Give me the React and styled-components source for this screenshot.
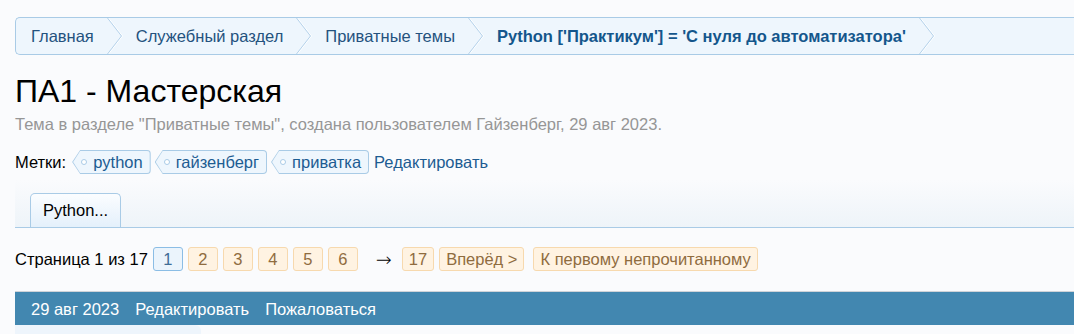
import React from 'react';
import styled, { createGlobalStyle } from 'styled-components';

const GlobalStyle = createGlobalStyle`
  html, body {
    margin: 0;
    padding: 0;
    overflow: hidden;
  }
  body {
    background: #fafbfd;
    font-family: "Liberation Sans", Arial, sans-serif;
    font-size: 16.5px;
    color: #000;
  }
`;

const crumbs = ['Главная', 'Служебный раздел', 'Приватные темы'];
const tags = ['python', 'гайзенберг', 'приватка'];
const pages = [1, 2, 3, 4, 5, 6];

const Arrow = () => (
  <svg width="16" height="36" viewBox="0 0 16 36">
    <polyline points="1.5,0 15.5,18 1.5,36" fill="none" stroke="#ffffff" strokeWidth="1" />
    <polyline points="0.5,0 14.5,18 0.5,36" fill="none" stroke="#b4d1ea" strokeWidth="1" />
  </svg>
);

const App = () => (
  <Page>
    <GlobalStyle />
    <Crumbs>
      {crumbs.map((c, i) => (
        <Crumb key={c} $first={i === 0}>
          <span>{c}</span>
          <Arrow />
        </Crumb>
      ))}
      <Crumb $current>
        <span>Python ['Практикум'] = 'С нуля до автоматизатора'</span>
        <Arrow />
      </Crumb>
    </Crumbs>

    <Title>ПА1 - Мастерская</Title>
    <Meta>Тема в разделе "Приватные темы", создана пользователем Гайзенберг, 29 авг 2023.</Meta>

    <TagRow>
      <TagLabel>Метки:</TagLabel>
      {tags.map((t) => (
        <Tag key={t}>
          <TagInner>
            <TagHole />
            {t}
          </TagInner>
        </Tag>
      ))}
      <EditLink>Редактировать</EditLink>
    </TagRow>

    <TabBar>
      <Tab>Python...</Tab>
    </TabBar>

    <PageNav>
      <PageLabel>Страница 1 из 17</PageLabel>
      {pages.map((p) => (
        <PageLink key={p} $current={p === 1}>{p}</PageLink>
      ))}
      <Skip>→</Skip>
      <PageLink>17</PageLink>
      <PageLink>Вперёд &gt;</PageLink>
      <PageLink $spaced>К первому непрочитанному</PageLink>
    </PageNav>

    <PostBar>
      <span>29 авг 2023</span>
      <span>Редактировать</span>
      <span>Пожаловаться</span>
    </PostBar>
    <Post>
      <UserCol />
    </Post>
  </Page>
);

export default App;

const Page = styled.div`
  width: 1120px;
  padding: 17px 0 0 15px;
`;

const Crumbs = styled.nav`
  display: flex;
  height: 38px;
  box-sizing: border-box;
  border: 1px solid #a9cbe6;
  border-right: none;
  border-radius: 5px 0 0 5px;
  background: #eef6fd;
`;

const Crumb = styled.a`
  display: flex;
  align-items: center;
  gap: 13px;
  padding-left: ${(p) => (p.$first ? 15 : 13)}px;
  color: ${(p) => (p.$current ? '#14568c' : '#24527e')};
  font-weight: ${(p) => (p.$current ? 700 : 400)};
  white-space: nowrap;
`;

const Title = styled.h1`
  margin: 17px 0 0;
  font-size: 32px;
  font-weight: 400;
  line-height: 38px;
  color: #000;
`;

const Meta = styled.div`
  margin-top: 4px;
  font-size: 16.5px;
  line-height: 20px;
  color: #969696;
`;

const TagRow = styled.div`
  display: flex;
  align-items: center;
  gap: 4px;
  margin-top: 16px;
  height: 24px;
  line-height: 24px;
`;

const TagLabel = styled.span`
  margin-right: 2px;
`;

const Tag = styled.a`
  display: inline-flex;
  height: 24px;
  padding: 1px;
  box-sizing: border-box;
  background: #a9cbe6;
  border-radius: 0 4px 4px 0;
  clip-path: polygon(8px 0, 100% 0, 100% 100%, 8px 100%, 0 50%);
`;

const TagInner = styled.span`
  display: flex;
  align-items: center;
  gap: 6px;
  padding: 0 7px 0 8px;
  background: #eef6fd;
  border-radius: 0 3px 3px 0;
  color: #1d5c92;
  clip-path: polygon(7px 0, 100% 0, 100% 100%, 7px 100%, 0 50%);
`;

const TagHole = styled.span`
  width: 4px;
  height: 4px;
  border: 1px solid #a9cbe6;
  border-radius: 50%;
  background: #fff;
`;

const EditLink = styled.a`
  margin-left: 1px;
  color: #1d5c92;
`;

const TabBar = styled.div`
  display: flex;
  margin-top: 6px;
  padding: 13px 0 0 15px;
  height: 34px;
  border-bottom: 1px solid #a9cbe6;
  background: linear-gradient(#fafbfd, #eef4f9);
`;

const Tab = styled.div`
  display: flex;
  align-items: center;
  padding: 0 12px;
  border: 1px solid #a9cbe6;
  border-bottom: none;
  border-radius: 5px 5px 0 0;
  background: linear-gradient(#fbfdff, #e4f0fb);
  color: #000;
`;

const PageNav = styled.div`
  display: flex;
  align-items: center;
  gap: 5px;
  margin-top: 19px;
  height: 24px;
`;

const PageLabel = styled.span`
  color: #000;
`;

const PageLink = styled.a`
  display: flex;
  align-items: center;
  justify-content: center;
  min-width: 30px;
  height: 24px;
  box-sizing: border-box;
  padding: 0 6px;
  margin-left: ${(p) => (p.$spaced ? 4 : 0)}px;
  border: 1px solid ${(p) => (p.$current ? '#8bbde5' : '#f7d9ae')};
  border-radius: 3px;
  background: ${(p) => (p.$current ? '#ebf4fc' : '#fff3e2')};
  color: ${(p) => (p.$current ? '#3f6d96' : '#8f6c3f')};
`;

const Skip = styled.span`
  margin: 0 5px 0 13px;
  font-family: "DejaVu Sans", sans-serif;
  font-size: 19px;
  font-weight: 300;
  color: #000;
`;

const PostBar = styled.div`
  display: flex;
  align-items: center;
  gap: 16px;
  margin-top: 20px;
  height: 32px;
  padding: 1px 0 0 16px;
  border-top: 1px solid #cfd3d8;
  background: #4287b0;
  color: #fff;
`;

const Post = styled.div`
  display: flex;
`;

const UserCol = styled.div`
  width: 186px;
  height: 24px;
  background: #eef5fc;
  border-radius: 0 6px 0 0;
`;
